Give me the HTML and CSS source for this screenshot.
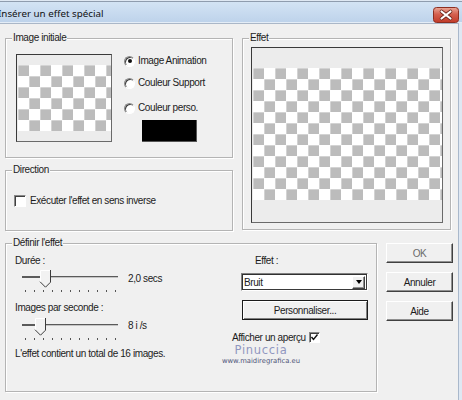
FILE: index.html
```html
<!DOCTYPE html>
<html lang="fr">
<head>
    <meta charset="UTF-8">
    <title>Insérer un effet spécial</title>
    <link rel="stylesheet" href="styles.css">
</head>
<body>
    <div class="window">
        <div class="titlebar">
            <span class="title">Insérer un effet spécial</span>
            <span class="close-btn">
                <svg width="26" height="16" viewBox="0 0 26 16">
                    <defs>
                        <linearGradient id="closeGrad" x1="0" y1="0" x2="0" y2="1">
                            <stop offset="0" stop-color="#eba898"/>
                            <stop offset="0.45" stop-color="#d4604f"/>
                            <stop offset="1" stop-color="#c23a28"/>
                        </linearGradient>
                    </defs>
                    <rect x="0.5" y="0.5" width="25" height="15" rx="3" fill="url(#closeGrad)" stroke="#8c2f22"/>
                    <path d="M8.5 4.5 L17.5 11.5 M17.5 4.5 L8.5 11.5" stroke="#6a241a" stroke-width="3.6" stroke-linecap="round"/>
                    <path d="M8.5 4.5 L17.5 11.5 M17.5 4.5 L8.5 11.5" stroke="#ffffff" stroke-width="2.2" stroke-linecap="round"/>
                </svg>
            </span>
        </div>

        <div class="dialog">
            <div class="top-row">
                <div class="left-col">
                    <div class="group group-initial">
                        <span class="group-label">Image initiale</span>
                        <div class="initial-body">
                            <div class="preview preview-small">
                                <div class="strip strip-top"></div>
                                <div class="checker"></div>
                                <div class="strip"></div>
                            </div>
                            <div class="source-options">
                                <div class="radio-row row-anim"><span class="radio checked"></span>Image Animation</div>
                                <div class="radio-row row-support"><span class="radio"></span>Couleur Support</div>
                                <div class="radio-row"><span class="radio"></span>Couleur perso.</div>
                                <div class="swatch"></div>
                            </div>
                        </div>
                    </div>

                    <div class="group group-direction">
                        <span class="group-label">Direction</span>
                        <div class="check-row">
                            <span class="checkbox"></span>Exécuter l'effet en sens inverse
                        </div>
                    </div>
                </div>

                <div class="group group-effect">
                    <span class="group-label">Effet</span>
                    <div class="preview preview-large">
                        <div class="strip strip-top"></div>
                        <div class="checker"></div>
                        <div class="strip strip-bottom"></div>
                    </div>
                </div>
            </div>

            <div class="bottom-row">
                <div class="group group-define">
                    <span class="group-label">Définir l'effet</span>
                    <div class="define-body">
                        <div class="define-left">
                            <div class="field-label">Durée :</div>
                            <div class="slider-row">
                                <svg class="slider" width="108" height="26" viewBox="0 0 108 26">
                                    <rect x="7" y="9" width="96" height="1" fill="#5a5a5a"/>
                                    <rect x="7" y="10" width="20" height="1" fill="#5a5a5a"/>
                                    <rect x="27" y="10" width="76" height="1" fill="#c4c4c4"/>
                                    <polygon points="25,3 35,3 35,15 30,20 25,15" fill="#f2f2f2"/>
                                    <polyline points="25.5,15 25.5,3.5 35,3.5" fill="none" stroke="#ffffff"/>
                                    <polyline points="35.5,3 35.5,15.2 30.5,20.2 25,14.7" fill="none" stroke="#3c3c3c"/>
                                    <g fill="#555">
                                        <rect x="10" y="23" width="1" height="2"/>
                                        <rect x="19" y="23" width="1" height="2"/>
                                        <rect x="28" y="23" width="1" height="2"/>
                                        <rect x="37" y="23" width="1" height="2"/>
                                        <rect x="46" y="23" width="1" height="2"/>
                                        <rect x="55" y="23" width="1" height="2"/>
                                        <rect x="64" y="23" width="1" height="2"/>
                                        <rect x="73" y="23" width="1" height="2"/>
                                        <rect x="82" y="23" width="1" height="2"/>
                                        <rect x="91" y="23" width="1" height="2"/>
                                        <rect x="100" y="23" width="1" height="2"/>
                                    </g>
                                </svg>
                                <span class="slider-value">2,0 secs</span>
                            </div>
                            <div class="field-label label-fps">Images par seconde :</div>
                            <div class="slider-row slider-fps">
                                <svg class="slider" width="108" height="26" viewBox="0 0 108 26">
                                    <rect x="7" y="9" width="96" height="1" fill="#5a5a5a"/>
                                    <rect x="7" y="10" width="15" height="1" fill="#5a5a5a"/>
                                    <rect x="22" y="10" width="81" height="1" fill="#c4c4c4"/>
                                    <polygon points="20,3 30,3 30,15 25,20 20,15" fill="#f2f2f2"/>
                                    <polyline points="20.5,15 20.5,3.5 30,3.5" fill="none" stroke="#ffffff"/>
                                    <polyline points="30.5,3 30.5,15.2 25.5,20.2 20,14.7" fill="none" stroke="#3c3c3c"/>
                                    <g fill="#555">
                                        <rect x="10" y="23" width="1" height="2"/>
                                        <rect x="19" y="23" width="1" height="2"/>
                                        <rect x="28" y="23" width="1" height="2"/>
                                        <rect x="37" y="23" width="1" height="2"/>
                                        <rect x="46" y="23" width="1" height="2"/>
                                        <rect x="55" y="23" width="1" height="2"/>
                                        <rect x="64" y="23" width="1" height="2"/>
                                        <rect x="73" y="23" width="1" height="2"/>
                                        <rect x="82" y="23" width="1" height="2"/>
                                        <rect x="91" y="23" width="1" height="2"/>
                                        <rect x="100" y="23" width="1" height="2"/>
                                    </g>
                                </svg>
                                <span class="slider-value">8 i /s</span>
                            </div>
                            <div class="total-text">L'effet contient un total de 16 images.</div>
                        </div>

                        <div class="define-right">
                            <div class="field-label effect-label">Effet :</div>
                            <div class="select">
                                <span class="select-text">Bruit</span>
                                <span class="select-btn"><span class="arrow"></span></span>
                            </div>
                            <div class="btn btn-default">Personnaliser...</div>
                            <div class="preview-row">
                                Afficher un aperçu
                                <span class="checkbox checkbox-small">
                                    <svg width="9" height="9" viewBox="0 0 9 9">
                                        <path d="M1.5 4 L3.5 6.5 L7.5 1.5" fill="none" stroke="#111" stroke-width="1.4"/>
                                    </svg>
                                </span>
                            </div>
                            <div class="watermark">
                                <div class="wm-name">Pinuccia</div>
                                <div class="wm-url">www.maidiregrafica.eu</div>
                            </div>
                        </div>
                    </div>
                </div>

                <div class="buttons">
                    <div class="btn btn-ok">OK</div>
                    <div class="btn">Annuler</div>
                    <div class="btn">Aide</div>
                </div>
            </div>
        </div>
    </div>
</body>
</html>
```

FILE: styles.css
```css
body {
    margin: 0;
    padding: 0;
    background-color: #f0f0f0;
}

.window {
    width: 462px;
    height: 400px;
    overflow: hidden;
    background-color: #dfe8f3;
    padding-top: 1px;
    box-sizing: border-box;
    font-family: "Liberation Sans", Arial, sans-serif;
    font-size: 10px;
    letter-spacing: -0.4px;
    color: #1c1c1c;
}

/* title bar */
.titlebar {
    height: 20px;
    border-top: 1px solid #8f9cae;
    border-bottom: 1px solid #e4edf7;
    background: linear-gradient(#d3e3f4, #bed3eb);
    display: flex;
    align-items: center;
    justify-content: space-between;
    padding-right: 3px;
}
.title {
    font-family: "Noto Sans", "Liberation Sans", sans-serif;
    font-size: 9.8px;
    letter-spacing: 0;
    color: #111;
    margin-left: -2px;
    padding-top: 2px;
}
.close-btn {
    display: flex;
    margin-top: 5px;
}

/* dialog body */
.dialog {
    width: 459px;
    height: 377px;
    box-sizing: border-box;
    background-color: #f0f0f0;
    border-top: 1px solid #aab7c8;
    border-right: 1px solid #a9b8cb;
    padding: 14px 0 0 5px;
}
.top-row {
    display: flex;
    gap: 9px;
}
.left-col {
    width: 228px;
    display: flex;
    flex-direction: column;
    gap: 12px;
}

/* etched group box */
.group {
    position: relative;
    box-sizing: border-box;
    border: 1px solid #b4b4b4;
    box-shadow: inset 1px 1px 0 #ffffff, 1px 1px 0 #ffffff;
}
.group-label {
    position: absolute;
    top: -8px;
    left: 6px;
    padding: 0 1px;
    line-height: 13px;
    background-color: #f0f0f0;
}
.group-initial {
    height: 120px;
}
.group-direction {
    height: 61px;
}
.group-effect {
    width: 209px;
    height: 192px;
    padding: 8px 0 0 8px;
}

/* previews */
.initial-body {
    display: flex;
    padding: 15px 0 0 10px;
}
.preview {
    box-sizing: border-box;
    border: 1px solid #3a3a3a;
    border-right-color: #6a6a6a;
    border-bottom-color: #6a6a6a;
    display: flex;
    flex-direction: column;
    background-color: #ececec;
}
.preview-small {
    width: 96px;
    height: 88px;
}
.preview-large {
    width: 192px;
    height: 176px;
}
.strip {
    flex: 1;
    background-color: #ececec;
}
.preview-small .strip-top {
    flex: none;
    height: 10px;
}
.preview-small .checker {
    height: 66px;
}
.preview-large .strip-top {
    flex: none;
    height: 20px;
}
.preview-large .checker {
    height: 132px;
}
.checker {
    margin-left: 1px;
    background-color: #ffffff;
    background-image:
        linear-gradient(90deg, rgba(255, 255, 255, 0.35) 1px, transparent 1px),
        linear-gradient(rgba(255, 255, 255, 0.35) 1px, transparent 1px),
        conic-gradient(#ffffff 0 25%, #bcbcbc 0 50%, #ffffff 0 75%, #bcbcbc 0);
    background-size: 11px 11px, 11px 11px, 22px 22px;
}

/* radio options */
.source-options {
    margin-left: 12px;
    display: flex;
    flex-direction: column;
}
.radio-row {
    display: flex;
    align-items: center;
    gap: 3px;
    height: 14px;
    line-height: 14px;
}
.row-anim {
    margin-bottom: 8px;
}
.row-support {
    margin-bottom: 11px;
}
.radio {
    width: 11px;
    height: 11px;
    box-sizing: border-box;
    border-radius: 50%;
    border: 1px solid;
    border-color: #8a8a8a #ffffff #ffffff #8a8a8a;
    box-shadow: inset 1px 1px 0 #404040;
    background-color: #ffffff;
    display: flex;
    align-items: center;
    justify-content: center;
}
.radio.checked::after {
    content: "";
    width: 4px;
    height: 4px;
    border-radius: 50%;
    background-color: #111;
}
.swatch {
    width: 55px;
    height: 22px;
    margin: 5px 0 0 18px;
    background-color: #000;
    border-right: 1px solid #555;
    border-bottom: 1px solid #555;
    box-sizing: border-box;
}

/* checkboxes */
.check-row {
    display: flex;
    align-items: center;
    gap: 4px;
    padding: 24px 0 0 8px;
    line-height: 12px;
}
.checkbox {
    width: 12px;
    height: 12px;
    box-sizing: border-box;
    border: 1px solid;
    border-color: #8a8a8a #ffffff #ffffff #8a8a8a;
    box-shadow: inset 1px 1px 0 #404040;
    background-color: #ffffff;
    display: flex;
    align-items: center;
    justify-content: center;
}
.checkbox-small {
    width: 11px;
    height: 11px;
}

/* bottom row */
.bottom-row {
    display: flex;
    gap: 9px;
    margin-top: 12px;
}
.group-define {
    width: 372px;
    height: 149px;
}
.define-body {
    display: flex;
    padding-top: 10px;
}
.define-left {
    width: 197px;
    padding-left: 9px;
}
.field-label {
    line-height: 13px;
    height: 13px;
}
.slider-row {
    display: flex;
    align-items: flex-start;
    gap: 5px;
}
.slider {
    display: block;
}
.slider-value {
    margin-top: 5px;
    line-height: 13px;
}
.label-fps {
    margin-top: 8px;
}
.slider-fps {
    margin-top: 1px;
}
.slider-fps .slider-value {
    margin-top: 4px;
}
.total-text {
    margin-top: 6px;
    line-height: 13px;
}

.define-right {
    width: 160px;
    display: flex;
    flex-direction: column;
    align-items: flex-start;
}
.effect-label {
    margin-left: 43px;
}
.select {
    width: 127px;
    height: 18px;
    margin: 6px 0 0 29px;
    box-sizing: border-box;
    border: 1px solid;
    border-color: #808080 #ffffff #ffffff #808080;
    box-shadow: inset 1px 1px 0 #303030, inset -1px -1px 0 #3a3a3a;
    background-color: #ffffff;
    display: flex;
    align-items: center;
    justify-content: space-between;
    padding: 1px 2px 1px 2px;
}
.select-text {
    line-height: 13px;
}
.select-btn {
    width: 13px;
    height: 13px;
    box-sizing: border-box;
    background-color: #f0f0f0;
    border: 1px solid;
    border-color: #ffffff #404040 #404040 #ffffff;
    box-shadow: inset -1px -1px 0 #909090;
    display: flex;
    align-items: center;
    justify-content: center;
}
.arrow {
    width: 0;
    height: 0;
    border-left: 3.5px solid transparent;
    border-right: 3.5px solid transparent;
    border-top: 4px solid #000;
}

/* buttons */
.btn {
    box-sizing: border-box;
    width: 67px;
    height: 20px;
    background-color: #f0f0f0;
    border: 1px solid;
    border-color: #ffffff #404040 #404040 #ffffff;
    box-shadow: inset -1px -1px 0 #909090;
    display: flex;
    align-items: center;
    justify-content: center;
}
.btn-ok {
    color: #6a6a6a;
}
.btn-default {
    width: 126px;
    margin: 9px 0 0 30px;
    border: 1px solid #1a1a1a;
    box-shadow: inset 1px 1px 0 #ffffff, inset -1px -1px 0 #808080;
}
.buttons {
    display: flex;
    flex-direction: column;
    gap: 9px;
}

.preview-row {
    display: flex;
    align-items: center;
    gap: 3px;
    margin: 11px 0 0 20px;
    line-height: 13px;
}

.watermark {
    width: 92px;
    margin: 0 0 0 3px;
    text-align: center;
    letter-spacing: 0;
}
.wm-name {
    font-family: "DejaVu Sans", sans-serif;
    font-size: 11.5px;
    line-height: 13px;
    letter-spacing: 0.7px;
    color: #9097c0;
}
.wm-url {
    font-family: "DejaVu Sans", sans-serif;
    font-size: 6.8px;
    line-height: 9px;
    color: #4e5478;
}
```
